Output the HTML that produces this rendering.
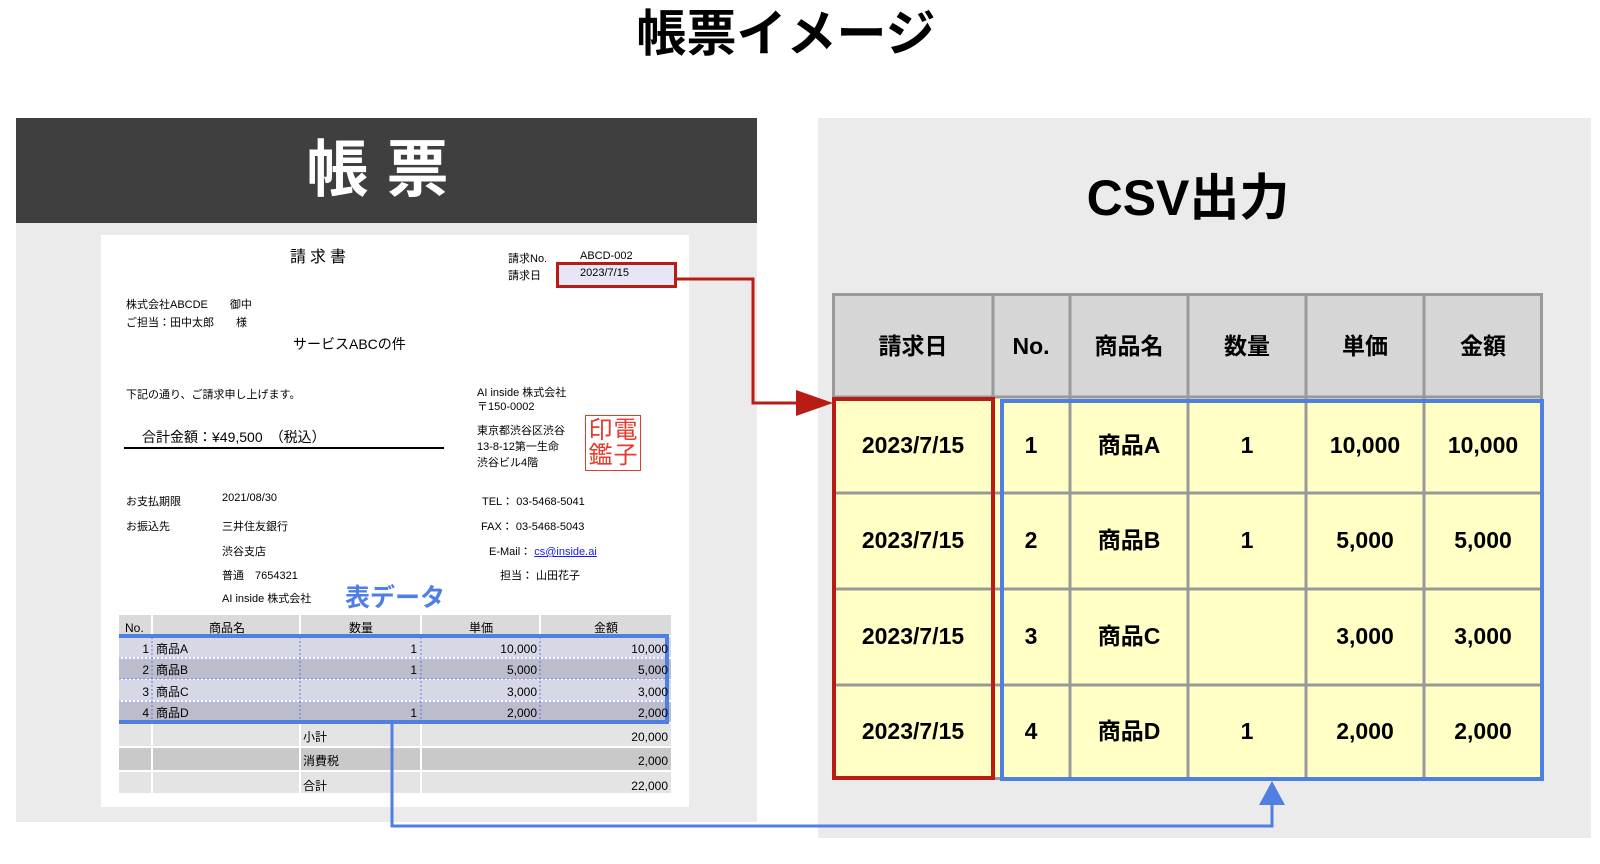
<!DOCTYPE html>
<html><head><meta charset="utf-8"><style>
*{margin:0;padding:0;box-sizing:border-box}
body{width:1600px;height:864px;background:#fff;position:relative;overflow:hidden;font-family:"Liberation Sans","Noto Sans CJK JP",sans-serif;color:#000}
.a{position:absolute;white-space:nowrap}
.s{font-size:11px}
table{border-collapse:collapse}
</style></head><body>
<div class="a" style="left:0;width:1572px;top:2px;text-align:center;font-size:50px;font-weight:bold;line-height:64px">帳票イメージ</div>

<!-- left panel -->
<div class="a" style="left:16px;top:118px;width:741px;height:704px;background:#ebebeb"></div>
<div class="a" style="left:16px;top:118px;width:741px;height:105px;background:#3f3f3f;color:#fff;font-size:62px;font-weight:bold;text-align:center;line-height:105px;letter-spacing:18px">帳票</div>
<div class="a" style="left:101px;top:235px;width:588px;height:572px;background:#fff"></div>

<div class="a" style="left:290px;top:243px;font-size:16px;letter-spacing:4px">請求書</div>
<div class="a s" style="left:508px;top:250px">請求No.</div>
<div class="a s" style="left:580px;top:250px">ABCD-002</div>
<div class="a s" style="left:508px;top:267px">請求日</div>
<div class="a" style="left:556px;top:262px;width:121px;height:26px;border:3px solid #b81c14;background:#e6e6f6"></div>
<div class="a s" style="left:580px;top:267px">2023/7/15</div>

<div class="a s" style="left:126px;top:296px">株式会社ABCDE　　御中</div>
<div class="a s" style="left:126px;top:314px">ご担当：田中太郎　　様</div>
<div class="a" style="left:293px;top:334px;font-size:14px">サービスABCの件</div>
<div class="a s" style="left:126px;top:386px">下記の通り、ご請求申し上げます。</div>
<div class="a" style="left:142px;top:427px;font-size:14px">合計金額：¥49,500　（税込）</div>
<div class="a" style="left:124px;top:447px;width:320px;height:2px;background:#000"></div>
<div class="a s" style="left:477px;top:386px;line-height:14px">AI inside 株式会社<br>〒150-0002</div>
<div class="a s" style="left:477px;top:423px;line-height:16px">東京都渋谷区渋谷<br>13-8-12第一生命<br>渋谷ビル4階</div>
<div class="a" style="left:585px;top:415px;width:56px;height:56px;border:1.5px solid #e53a2e;color:#e53a2e;font-size:24px;line-height:25px;text-align:center;display:flex;flex-direction:row-reverse;justify-content:center;padding-top:2px"><div style="width:25px">電<br>子</div><div style="width:25px">印<br>鑑</div></div>

<div class="a s" style="left:126px;top:493px">お支払期限</div>
<div class="a s" style="left:222px;top:492px">2021/08/30</div>
<div class="a s" style="left:126px;top:518px">お振込先</div>
<div class="a s" style="left:222px;top:518px">三井住友銀行</div>
<div class="a s" style="left:222px;top:543px">渋谷支店</div>
<div class="a s" style="left:222px;top:567px">普通　7654321</div>
<div class="a s" style="left:222px;top:590px">AI inside 株式会社</div>
<div class="a s" style="left:482px;top:493px">TEL：  03-5468-5041</div>
<div class="a s" style="left:481px;top:518px">FAX：  03-5468-5043</div>
<div class="a s" style="left:489px;top:543px">E-Mail：  <span style="color:#1a1aee;text-decoration:underline">cs@inside.ai</span></div>
<div class="a s" style="left:500px;top:567px">担当：  山田花子</div>
<div class="a" style="left:345px;top:578px;font-size:25px;font-weight:bold;color:#4f7fe0">表データ</div>

<!-- small table -->
<div class="a" style="left:119px;top:615px;width:552px;height:178px">
<svg width="552" height="178" style="position:absolute;left:0;top:0">
<rect x="0" y="0" width="552" height="178" fill="#fff"/>
<rect x="0" y="0" width="552" height="20" fill="#dadada"/>
<rect x="0" y="22" width="552" height="20" fill="#d7d8e6"/>
<rect x="0" y="44" width="552" height="20" fill="#bbbccc"/>
<rect x="0" y="65" width="552" height="20" fill="#d7d8e6"/>
<rect x="0" y="87" width="552" height="20" fill="#bbbccc"/>
<rect x="0" y="109" width="552" height="22" fill="#e4e4e4"/>
<rect x="0" y="133" width="552" height="22" fill="#c9c9c9"/>
<rect x="0" y="157" width="552" height="21" fill="#e4e4e4"/>
<g stroke="#fff" stroke-width="2"><line x1="33" y1="0" x2="33" y2="22"/><line x1="181" y1="0" x2="181" y2="22"/><line x1="302" y1="0" x2="302" y2="22"/><line x1="421" y1="0" x2="421" y2="22"/>
<line x1="33" y1="109" x2="33" y2="178"/><line x1="181" y1="109" x2="181" y2="178"/><line x1="302" y1="109" x2="302" y2="178"/><line x1="0" y1="132" x2="552" y2="132"/><line x1="0" y1="156" x2="552" y2="156"/></g>
<g stroke="#5a5aee" stroke-width="0.8" stroke-dasharray="2,2"><line x1="0" y1="43" x2="552" y2="43"/><line x1="0" y1="64" x2="552" y2="64"/><line x1="0" y1="86" x2="552" y2="86"/><line x1="33" y1="22" x2="33" y2="107"/><line x1="181" y1="22" x2="181" y2="107"/><line x1="302" y1="22" x2="302" y2="107"/><line x1="421" y1="22" x2="421" y2="107"/></g>
<rect x="-3" y="21" width="551" height="86" fill="none" stroke="#4f7fe0" stroke-width="4"/>
<g font-size="12" font-family="Liberation Sans,Noto Sans CJK JP,sans-serif">
<text x="6" y="17">No.</text><text x="90" y="17">商品名</text><text x="230" y="17">数量</text><text x="350" y="17">単価</text><text x="475" y="17">金額</text>
<g text-anchor="end"><text x="30" y="38">1</text><text x="30" y="59">2</text><text x="30" y="81">3</text><text x="30" y="102">4</text>
<text x="298" y="38">1</text><text x="298" y="59">1</text><text x="298" y="102">1</text>
<text x="418" y="38">10,000</text><text x="418" y="59">5,000</text><text x="418" y="81">3,000</text><text x="418" y="102">2,000</text>
<text x="549" y="38">10,000</text><text x="549" y="59">5,000</text><text x="549" y="81">3,000</text><text x="549" y="102">2,000</text>
<text x="549" y="126">20,000</text><text x="549" y="150">2,000</text><text x="549" y="175">22,000</text></g>
<text x="37" y="38">商品A</text><text x="37" y="59">商品B</text><text x="37" y="81">商品C</text><text x="37" y="102">商品D</text>
<text x="184" y="126">小計</text><text x="184" y="150">消費税</text><text x="184" y="175">合計</text></g>
</svg></div>

<!-- right panel -->
<div class="a" style="left:818px;top:118px;width:773px;height:720px;background:#ebebeb"></div>
<div class="a" style="left:818px;top:158px;width:740px;text-align:center;font-size:50px;font-weight:bold">CSV出力</div>
<svg class="a" style="left:0;top:0" width="1600" height="864">
<rect x="832" y="293" width="711" height="104" fill="#d6d6d6"/>
<rect x="832" y="397" width="711" height="383" fill="#ffffc6"/>
<g stroke="#999" stroke-width="3" fill="none">
<rect x="833.5" y="294.5" width="708" height="484"/>
<line x1="993" y1="293" x2="993" y2="780"/><line x1="1070" y1="293" x2="1070" y2="780"/><line x1="1188" y1="293" x2="1188" y2="780"/><line x1="1306" y1="293" x2="1306" y2="780"/><line x1="1424" y1="293" x2="1424" y2="780"/>
<line x1="832" y1="397" x2="1543" y2="397"/><line x1="832" y1="493" x2="1543" y2="493"/><line x1="832" y1="589" x2="1543" y2="589"/><line x1="832" y1="685" x2="1543" y2="685"/></g>
<rect x="834" y="399" width="159" height="379" fill="none" stroke="#b81c14" stroke-width="4"/>
<rect x="1002" y="401" width="540" height="378" fill="none" stroke="#4f7fe0" stroke-width="4"/>
<polyline points="677,279 753,279 753,403 800,403" fill="none" stroke="#b81c14" stroke-width="3"/>
<polygon points="796,390 833,403 796,416" fill="#b81c14"/>
<polyline points="392,722 392,826 1272,826 1272,800" fill="none" stroke="#4f7fe0" stroke-width="3"/>
<polygon points="1259,805 1272,781 1285,805" fill="#4f7fe0"/>
<g font-family="Liberation Sans,Noto Sans CJK JP,sans-serif" font-weight="bold" font-size="23" text-anchor="middle">
<text x="913" y="354">請求日</text><text x="1031" y="354">No.</text><text x="1129" y="354">商品名</text><text x="1247" y="354">数量</text><text x="1365" y="354">単価</text><text x="1483" y="354">金額</text>
<text x="913" y="453">2023/7/15</text><text x="1031" y="453">1</text><text x="1129" y="453">商品A</text><text x="1247" y="453">1</text><text x="1365" y="453">10,000</text><text x="1483" y="453">10,000</text>
<text x="913" y="548">2023/7/15</text><text x="1031" y="548">2</text><text x="1129" y="548">商品B</text><text x="1247" y="548">1</text><text x="1365" y="548">5,000</text><text x="1483" y="548">5,000</text>
<text x="913" y="644">2023/7/15</text><text x="1031" y="644">3</text><text x="1129" y="644">商品C</text><text x="1365" y="644">3,000</text><text x="1483" y="644">3,000</text>
<text x="913" y="739">2023/7/15</text><text x="1031" y="739">4</text><text x="1129" y="739">商品D</text><text x="1247" y="739">1</text><text x="1365" y="739">2,000</text><text x="1483" y="739">2,000</text>
</g></svg>
</body></html>
